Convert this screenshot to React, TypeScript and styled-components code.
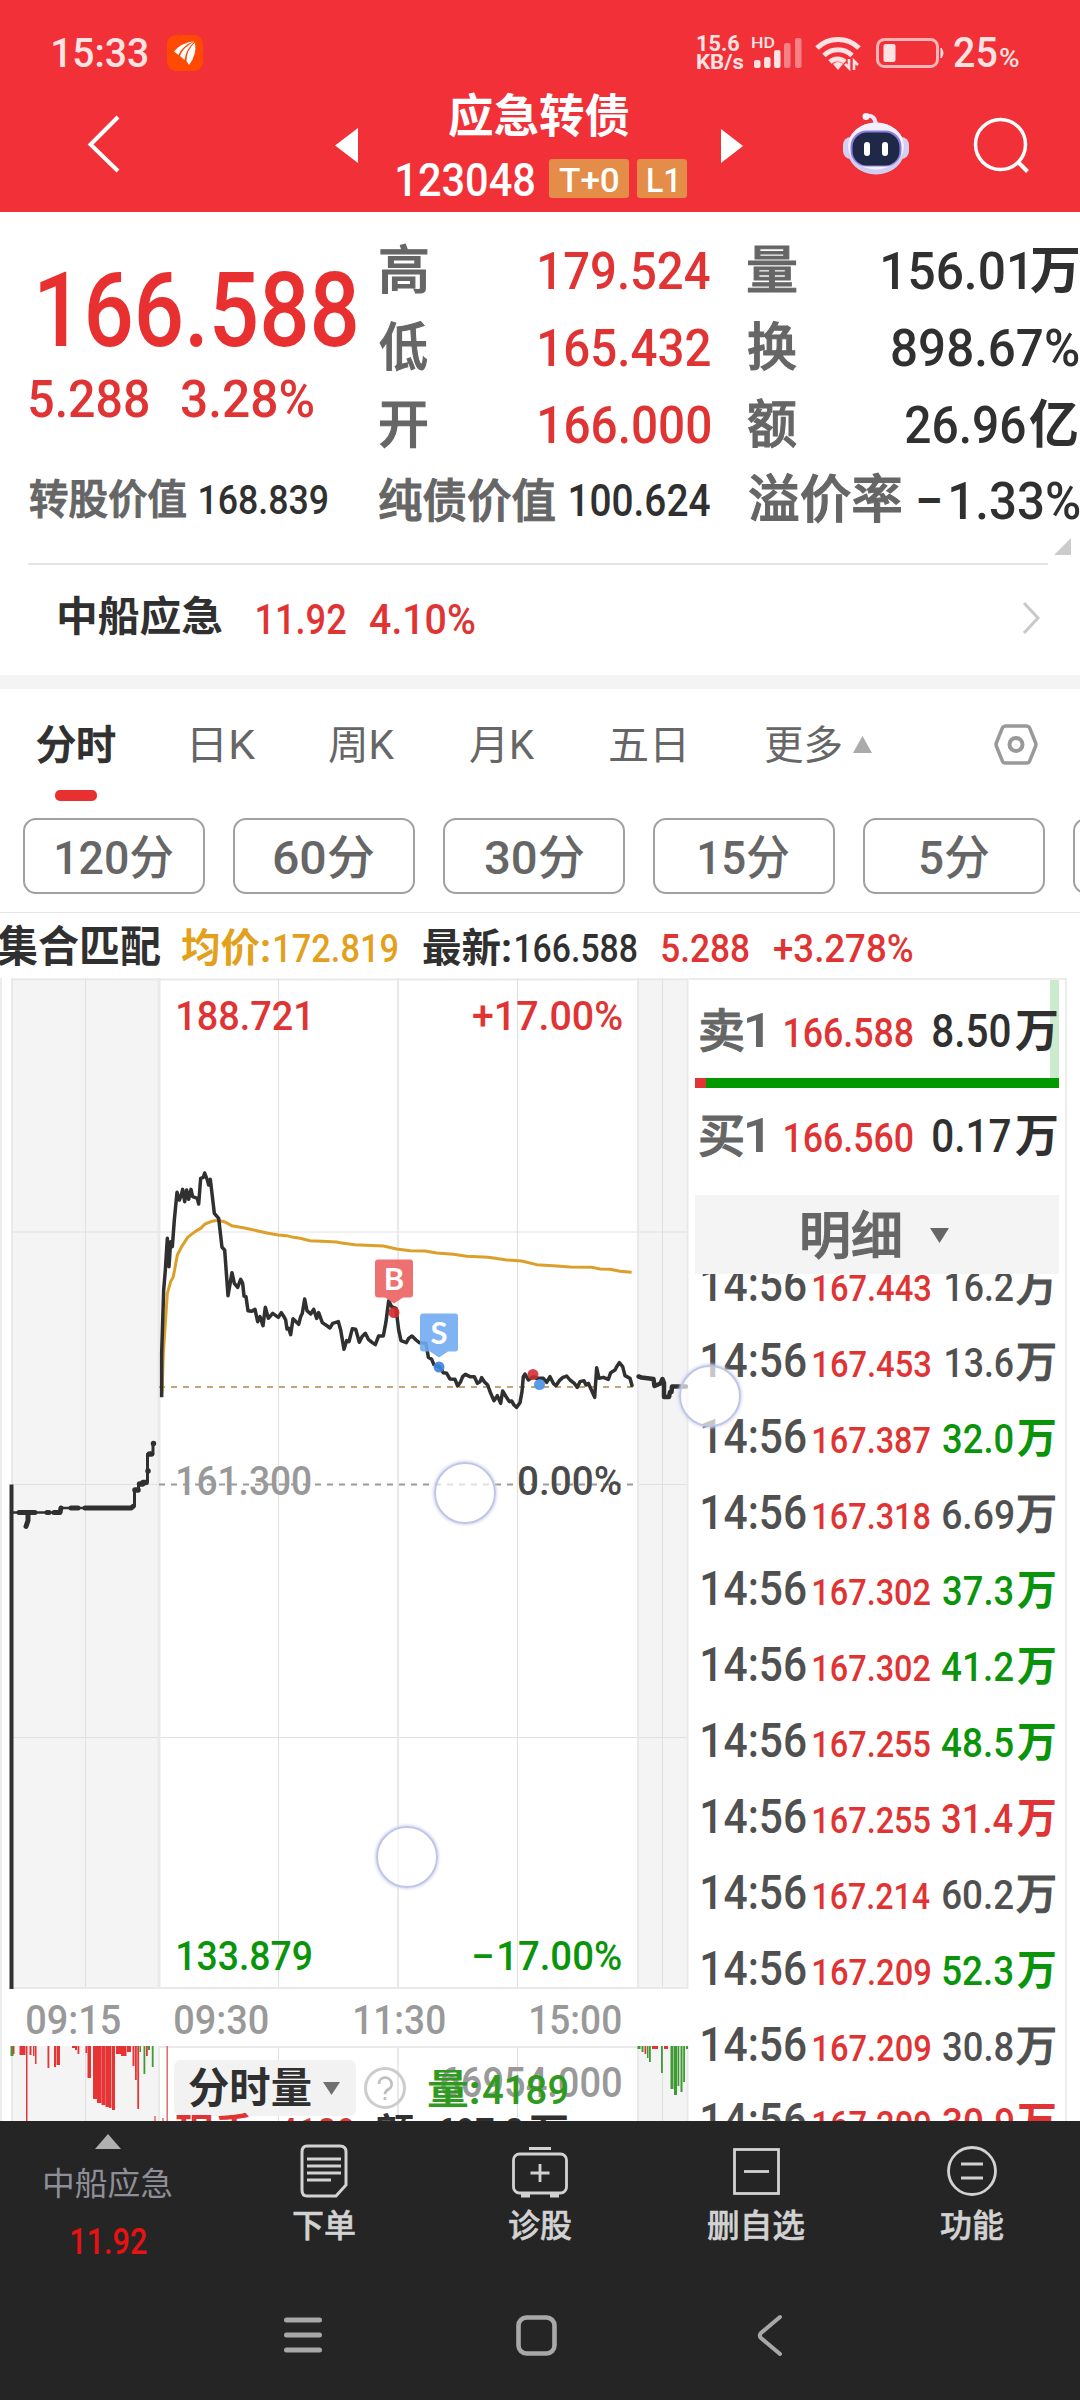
import React, { useMemo } from 'react';
import styled, { createGlobalStyle } from 'styled-components';

const FONT = 'Roboto, "Noto Sans CJK SC", sans-serif';

const C = {
  brand: '#f13038',
  red: '#e03434',
  green: '#0a940a',
  ink: '#303030',
  gray: '#666666',
  mid: '#505050',
  light: '#999999',
  orange: '#e2a01c',
  rule: '#e6e6e6',
  dark: '#252525',
};

const Global = createGlobalStyle`
  *{box-sizing:border-box}
  body{margin:0;background:#fff;font-family:${FONT}}
`;

/* ---------- condensed text: glyphs squeezed to a given ink width ---------- */

let ctx: CanvasRenderingContext2D | null = null;
function inkBox(text: string, size: number, weight: number) {
  if (!ctx) ctx = document.createElement('canvas').getContext('2d');
  ctx!.font = `${weight} ${size}px ${FONT}`;
  const m = ctx!.measureText(text);
  return { left: -m.actualBoundingBoxLeft, width: m.actualBoundingBoxRight + m.actualBoundingBoxLeft };
}

const FitBox = styled.div<{ $w: number; $size: number; $weight: number; $color: string; $ml: number; $mt: number; $han: boolean }>`
  flex: none;
  width: ${(p) => p.$w}px;
  height: ${(p) => p.$size}px;
  line-height: ${(p) => p.$size}px;
  margin-left: ${(p) => p.$ml}px;
  margin-top: ${(p) => p.$mt}px;
  font-size: ${(p) => p.$size}px;
  font-weight: ${(p) => p.$weight};
  color: ${(p) => p.$color};
  white-space: pre;
  -webkit-text-stroke: ${(p) => (p.$han && p.$weight === 500 ? (p.$size > 36 ? 1.1 : 0.5) : 0)}px ${(p) => p.$color};
`;
const Glyphs = styled.span`
  display: inline-block;
  transform-origin: 0 50%;
`;

type FitProps = { t: string; w: number; size: number; color?: string; weight?: number; ml?: number; mt?: number };
function Fit({ t, w, size, color = C.ink, weight = 500, ml = 0, mt = 0 }: FitProps) {
  const b = useMemo(() => inkBox(t, size, weight), [t, size, weight]);
  const k = w / b.width;
  const han = /^[\u4e00-\u9fff]+$/.test(t);
  return (
    <FitBox $w={w} $size={size} $weight={weight} $color={color} $ml={ml} $mt={mt} $han={han}>
      <Glyphs style={{ transform: `translateX(${-b.left * k}px) scaleX(${k})` }}>{t}</Glyphs>
    </FitBox>
  );
}

const Icon = styled.svg<{ $ml?: number; $mt?: number }>`
  display: block;
  flex: none;
  overflow: visible;
  margin-left: ${(p) => p.$ml ?? 0}px;
  margin-top: ${(p) => p.$mt ?? 0}px;
`;

const Screen = styled.div`
  position: relative;
  width: 1080px;
  height: 2400px;
  overflow: hidden;
  background: #fff;
  display: flex;
  flex-direction: column;
`;

/* ---------- header ---------- */

const Header = styled.header`
  height: 212px;
  flex: none;
  background: ${C.brand};
`;
const StatusBar = styled.div`
  height: 105px;
  display: flex;
  align-items: center;
`;
const Stack = styled.div<{ $ml?: number; $w?: number }>`
  flex: none;
  display: flex;
  flex-direction: column;
  margin-left: ${(p) => p.$ml ?? 0}px;
  width: ${(p) => (p.$w ? p.$w + 'px' : 'auto')};
`;
const TitleBar = styled.div`
  height: 107px;
  display: flex;
  align-items: flex-start;
`;
const CodeRow = styled.div`
  display: flex;
  align-items: center;
  height: 39px;
  margin-top: 20px;
`;
const Tag = styled.div<{ $w: number; $ml: number }>`
  width: ${(p) => p.$w}px;
  height: 39px;
  margin-left: ${(p) => p.$ml}px;
  border-radius: 3px;
  background: #e38d48;
  display: flex;
  align-items: center;
  justify-content: center;
`;

function StatusIcons() {
  const p = '#ffe3e3';
  return (
    <>
      <Icon width="51" height="32" viewBox="751 37 51 32" $ml={7}>
        {[[753, 60], [763, 57], [773, 50], [783, 43], [794, 38]].map(([x, y], i) => (
          <rect key={i} x={x} y={y} width="6.5" height={68 - y} rx="2" fill={p} opacity={i < 3 ? 1 : 0.45} />
        ))}
        <text x="750" y="48" fontSize="15" fontWeight="500" fontFamily={FONT} fill={p} textLength="24" lengthAdjust="spacingAndGlyphs">HD</text>
      </Icon>
      <Icon width="47" height="34" viewBox="0 0 47 34" $ml={12}>
        <g fill="none" stroke={p} strokeWidth="5">
          <path d="M2 12a30 30 0 0 1 42 0" />
          <path d="M9 19.500a20 20 0 0 1 28 0" />
          <path d="M15 26a11 11 0 0 1 15 0" />
        </g>
        <path d="M18 28q5-4 10 0l-5 6z" fill={p} />
        <path d="M34 23v9l-4-4M39 34v-9l4 4" fill="none" stroke={p} strokeWidth="2.600" />
      </Icon>
      <Icon width="69" height="30" viewBox="0 0 69 30" $ml={14}>
        <rect x="1.500" y="1.500" width="60" height="27" rx="7" fill="none" stroke={p} strokeOpacity=".75" strokeWidth="3" />
        <rect x="7.500" y="6" width="12" height="18" rx="2" fill={p} />
        <path d="M65 10q4 5 0 10z" fill={p} stroke={p} strokeWidth="1" />
      </Icon>
    </>
  );
}

function Robot() {
  return (
    <Icon width="66" height="62" viewBox="0 0 66 62" $ml={100} $mt={8}>
      <path d="M23 3q9-2 10 9" fill="none" stroke="#e8e6fa" strokeWidth="4" strokeLinecap="round" />
      <circle cx="23" cy="3.500" r="3.500" fill="#f6f4ff" />
      <rect x="0" y="24" width="66" height="22" rx="8" fill="#d4d2f2" />
      <ellipse cx="33" cy="35.500" rx="29" ry="26" fill="#d0cef2" />
      <ellipse cx="33" cy="33" rx="28" ry="23.500" fill="#f3f1ff" />
      <rect x="7.500" y="17.500" width="51" height="36" rx="16" fill="#8d7fe0" />
      <rect x="9.500" y="19.500" width="47" height="33" rx="14.500" fill="#1f2846" />
      <rect x="21" y="29" width="6" height="14" rx="3" fill="#fff" />
      <rect x="39" y="29" width="6" height="14" rx="3" fill="#fff" />
    </Icon>
  );
}

function TopHeader() {
  return (
    <Header>
      <StatusBar>
        <Fit t="15:33" w={95} size={41} color="#ffe3e3" ml={53} mt={1} />
        <Icon width="36" height="36" viewBox="0 0 36 36" $ml={19}>
          <rect width="36" height="36" rx="9" fill="#ff4a03" />
          <path d="M7 16.500q7-8.500 20-10.500Q15 11 11.500 20zM13 21q3-9 14.500-14.500Q19 14 17.500 25zM19.500 26q0-11 8.500-18.500Q30 20 22 30z" fill="#fff" />
        </Icon>
        <Stack $ml={494} $w={48}>
          <Fit t="15.6" w={42} size={22} weight={700} color="#ffe3e3" />
          <Fit t="KB/s" w={47} size={21} weight={700} color="#ffe3e3" mt={-3} />
        </Stack>
        <StatusIcons />
        <Fit t="25" w={43} size={42} color="#ffe3e3" ml={9} mt={1} />
        <Fit t="%" w={19} size={25} color="#ffe3e3" ml={3} mt={11} />
      </StatusBar>
      <TitleBar>
        <Icon width="32" height="58" viewBox="0 0 32 58" $ml={88} $mt={10}>
          <path d="M30 2L2.500 29.500L30 56" fill="none" stroke="#fff" strokeWidth="4" />
        </Icon>
        <Icon width="23" height="35" viewBox="0 0 23 35" $ml={215} $mt={23}>
          <path d="M0 17.500L23 0v35z" fill="#fff" />
        </Icon>
        <Stack $ml={39} $w={290}>
          <Fit t="应急转债" w={180} size={46} weight={700} color="#fff" ml={52} mt={-12} />
          <CodeRow>
            <Fit t="123048" w={137} size={46} weight={500} color="#fff" mt={3} />
            <Tag $w={80} $ml={15}><Fit t="T+0" w={60} size={33} color="#fff" mt={3} /></Tag>
            <Tag $w={50} $ml={8}><Fit t="L1" w={28} size={33} color="#fff" mt={3} /></Tag>
          </CodeRow>
        </Stack>
        <Icon width="22" height="34" viewBox="0 0 22 34" $ml={34} $mt={24}>
          <path d="M22 17L0 0v34z" fill="#fff" />
        </Icon>
        <Robot />
        <Icon width="56" height="56" viewBox="0 0 56 56" $ml={65} $mt={13}>
          <circle cx="26.500" cy="26.500" r="25" fill="none" stroke="#fff" strokeWidth="3.500" />
          <path d="M44.500 44.500l9 9" stroke="#fff" strokeWidth="4" />
        </Icon>
      </TitleBar>
    </Header>
  );
}

/* ---------- quote ---------- */

const Quote = styled.section`
  display: flex;
  height: 264px;
  flex: none;
`;
const Cell = styled.div`
  height: 77px;
  display: flex;
  align-items: baseline;
`;
const Column = styled.div<{ $w: number; $pt: number }>`
  flex: none;
  width: ${(p) => p.$w}px;
  padding-top: ${(p) => p.$pt}px;
`;
const Push = styled.div`
  flex: 1;
`;
const ValueRow = styled.div`
  display: flex;
  align-items: center;
  height: 47px;
  flex: none;
`;
const CornerRow = styled.div`
  height: 42px;
  flex: none;
  margin: 0 32px 0 28px;
  border-bottom: 2px solid #e4e4e4;
  padding-top: 15px;
`;
const StockRow = styled.div`
  height: 110px;
  flex: none;
  display: flex;
  align-items: center;
`;
const Band = styled.div`
  height: 14px;
  flex: none;
  background: #f4f4f4;
`;

function QuotePanel() {
  return (
    <>
      <Quote>
        <Column $w={380} $pt={47}>
          <Fit t="166.588" w={316} size={103} weight={500} color="#e83030" ml={40} />
          <Cell>
            <Fit t="5.288" w={118} size={52} color={C.red} ml={30} mt={12} />
            <Fit t="3.28%" w={132} size={52} color={C.red} ml={33} mt={12} />
          </Cell>
        </Column>
        <Column $w={330} $pt={34}>
          {[['高', '179.524'], ['低', '165.432'], ['开', '166.000']].map(([l, v]) => (
            <Cell key={l}>
              <Fit t={l} w={47} size={52} color={C.gray} />
              <Push />
              <Fit t={v} w={170} size={52} color={C.red} />
            </Cell>
          ))}
        </Column>
        <Column $w={370} $pt={34}>
          <Cell>
            <Fit t="量" w={48} size={52} color={C.gray} ml={38} />
            <Fit t="156.01" w={142} size={52} ml={87} />
            <Fit t="万" w={48} size={52} weight={700} ml={5} />
          </Cell>
          <Cell>
            <Fit t="换" w={48} size={52} color={C.gray} ml={38} />
            <Fit t="898.67%" w={186} size={52} ml={96} />
          </Cell>
          <Cell>
            <Fit t="额" w={48} size={52} color={C.gray} ml={38} />
            <Fit t="26.96" w={119} size={52} ml={110} />
            <Fit t="亿" w={48} size={52} weight={700} ml={4} />
          </Cell>
        </Column>
      </Quote>
      <ValueRow>
        <Fit t="转股价值" w={156} size={41} color={C.gray} ml={30} mt={2} />
        <Fit t="168.839" w={127} size={41} ml={14} mt={2} />
        <Fit t="纯债价值" w={176} size={46} color={C.gray} ml={52} mt={2} />
        <Fit t="100.624" w={140} size={45} ml={15} mt={2} />
        <Fit t="溢价率" w={152} size={52} color={C.gray} ml={39} mt={2} />
        <Fit t="–" w={22} size={52} ml={17} mt={4} />
        <Fit t="1.33%" w={128} size={52} ml={11} mt={4} />
      </ValueRow>
      <CornerRow>
        <Icon width="17" height="17" viewBox="0 0 17 17" $ml={1026}>
          <path d="M17 0v17H0z" fill="#ccc" />
        </Icon>
      </CornerRow>
      <StockRow>
        <Fit t="中船应急" w={163} size={41} weight={700} ml={59} mt={-5} />
        <Fit t="11.92" w={89} size={42} color={C.red} ml={35} />
        <Fit t="4.10%" w={105} size={42} color={C.red} ml={24} />
        <Icon width="18" height="32" viewBox="0 0 18 32" $ml={547} $mt={-5}>
          <path d="M2 1l14 15L2 31" fill="none" stroke="#c8c8c8" strokeWidth="3" />
        </Icon>
      </StockRow>
      <Band />
    </>
  );
}

/* ---------- tabs ---------- */

const Tabs = styled.nav`
  display: flex;
  align-items: flex-start;
  height: 129px;
  flex: none;
  padding-top: 37px;
`;
const Underline = styled.div`
  width: 42px;
  height: 11px;
  border-radius: 5px;
  background: #e83030;
  margin: 24px 0 0 18px;
`;
const Periods = styled.div`
  display: flex;
  gap: 28px;
  height: 95px;
  flex: none;
  padding-left: 23px;
  overflow: hidden;
  border-bottom: 1.5px solid ${C.rule};
`;
const Period = styled.div`
  flex: none;
  width: 182px;
  height: 76px;
  border: 2px solid #a0a0a0;
  border-radius: 13px;
  display: flex;
  align-items: center;
  justify-content: center;
  padding-top: 2px;
`;

const PERIODS: [string, number][] = [['120分', 117], ['60分', 100], ['30分', 99], ['15分', 90], ['5分', 69]];

function TabSection() {
  return (
    <>
      <Tabs>
        <Stack $ml={37}>
          <Fit t="分时" w={78} size={40} />
          <Underline />
        </Stack>
        <Fit t="日K" w={63} size={40} weight={400} color={C.gray} ml={78} />
        <Fit t="周K" w={66} size={40} weight={400} color={C.gray} ml={73} />
        <Fit t="月K" w={65} size={40} weight={400} color={C.gray} ml={75} />
        <Fit t="五日" w={74} size={40} weight={400} color={C.gray} ml={75} />
        <Fit t="更多" w={76} size={40} weight={400} color={C.gray} ml={81} />
        <Icon width="19" height="17" viewBox="0 0 19 17" $ml={12} $mt={10}>
          <path d="M9.500 0l9.500 17H0z" fill="#aaa" />
        </Icon>
        <Icon width="44" height="42" viewBox="0 0 44 42" $ml={122} $mt={-2}>
          <path d="M11.500 2h21q2 0 3 1.700l6 14.800q.8 2 0 4l-6 14.800q-1 1.700-3 1.700h-21q-2 0-3-1.700l-6-14.800q-.8-2 0-4l6-14.800q1-1.700 3-1.700z" fill="none" stroke="#999" strokeWidth="3.500" strokeLinejoin="round" />
          <circle cx="22" cy="20.500" r="6.500" fill="none" stroke="#999" strokeWidth="4" />
        </Icon>
      </Tabs>
      <Periods>
        {PERIODS.map(([t, w]) => (
          <Period key={t}><Fit t={t} w={w} size={47} color={C.gray} /></Period>
        ))}
        <Period />
      </Periods>
    </>
  );
}

/* ---------- info line ---------- */

const Info = styled.div`
  display: flex;
  align-items: baseline;
  height: 65px;
  flex: none;
  padding-top: 13px;
`;

/* ---------- main area ---------- */

const Main = styled.main`
  display: flex;
  height: 1143px;
  flex: none;
  overflow: hidden;
`;
const ChartColumn = styled.div`
  width: 689px;
  flex: none;
`;
const ChartArea = styled.div<{ $h: number }>`
  position: relative;
  height: ${(p) => p.$h}px;
  overflow: hidden;
`;
const Plot = styled.svg`
  display: block;
`;
const Overlay = styled.div`
  position: absolute;
  inset: 0;
`;
const LabelRow = styled.div<{ $pt: number }>`
  display: flex;
  align-items: baseline;
  padding-top: ${(p) => p.$pt}px;
`;
const Axis = styled.div`
  display: flex;
  height: 57px;
  padding-top: 11px;
  border-left: 2px solid #ececec;
`;

const PRICE_A =
  '65,772 65,640 71,450 76,390 82,295 87,380 92,305 97,320 103,240 111,157 118,180 124,165 128,148 134,185 140,150 146,178 153,148 158,170 172,175 176,192 182,115 190,112 194,99 202,120 206,135 211,118 223,220 236,235 246,322 254,330 264,467 276,398 283,430 293,442 302,418 308,430 312,468 318,470 324,512 335,514 345,508 353,545 360,530 369,557 376,502 385,535 398,520 415,532 424,518 432,530 437,540 441,567 446,565 452,584 459,536 476,553 482,530 487,520 494,477 501,512 512,522 521,508 530,535 536,518 547,548 562,558 570,564 578,550 595,545 602,570 612,628 620,602 627,605 637,566 647,568 658,607 666,590 676,580 685,598 697,608 706,614 716,588 730,588 738,545 746,482 755,500 768,505 776,570 783,602 799,608 806,595 816,588 828,600 838,608 858,610 865,652 875,658 883,677';
const PRICE_B =
  '283,437 298,440 310,458 320,460 330,477 345,478 353,498 362,485 368,470 376,463 390,470 403,470 412,490 420,485 425,473 433,485 443,495 452,520 462,542 472,527 482,550 488,513 497,528 508,545 515,543 522,555 530,562 540,548 546,515 550,470 555,462 565,480 580,470 590,475 610,475 620,487 630,470 640,490 648,497 658,482 668,473 680,468 690,480 703,490 712,502 720,485 732,482 738,495 745,490 764,532 770,443 777,475 790,472 805,478 812,458 825,450 830,440 838,428 848,440 855,467 870,475 877,500';
const AVG_A =
  '66,760 70,640 82,460 92,425 100,410 112,345 125,320 143,292 165,275 182,265 195,252 215,244 236,241 255,246 275,257 310,263 350,272 385,280 415,285 440,287 460,292 480,295 510,302 545,304 590,306 600,308';
const AVG_B =
  '0,68 45,74 130,78 170,87 210,92 255,93 290,99 340,103 380,109 445,112 500,120 545,123 590,134 640,137 690,141 755,142 780,147 810,148 840,154 875,157';

function Marker({ x, y, label, fill }: { x: number; y: number; label: string; fill: string }) {
  return (
    <g>
      <path d={`M${x - 16} ${y}h32q3 0 3 3v32q0 3-3 3h-7l-9 6-9-6h-7q-3 0-3-3v-32q0-3 3-3z`} fill={fill} fillOpacity=".9" />
      <text x={x} y={y + 30} textAnchor="middle" fontFamily="Lato, sans-serif" fontWeight="700" fontSize="31" fill="#fff">{label}</text>
    </g>
  );
}

function PriceChart() {
  return (
    <ChartArea $h={1011}>
      <Plot width="689" height="1011" viewBox="0 978 689 1011">
        <rect x="0" y="978" width="2" height="1011" fill="#ececec" />
        <rect x="12" y="978" width="147" height="1011" fill="#f4f4f4" />
        <rect x="637" y="978" width="50" height="1011" fill="#f4f4f4" />
        <g stroke="#e0e0e0" strokeWidth="1">
          <path d="M85.500 978V1989M278.500 978V1989M517.500 978V1989M662.500 978V1989" />
          <path d="M12 1232h675M12 1484.500h147M637 1484.500h50M12 1737.500h675" />
        </g>
        <g stroke="#e9e9e9" strokeWidth="2">
          <path d="M12 978V1989M398 978V1989M638 978V1989M687.500 978V1989M12 979.500h675M12 1988h675" />
          <path d="M159 978V1989" strokeWidth="3" />
        </g>
        <path d="M159 1387h475" stroke="#bfa878" strokeWidth="2" strokeDasharray="6 6" />
        <path d="M159 1484.500h475" stroke="#9a9a9a" strokeWidth="2" strokeDasharray="6 6" />
        <g fill="none" strokeLinejoin="round" strokeLinecap="butt">
          <g transform="translate(140 1140) scale(.33333)">
            <polyline points={AVG_A} stroke="#dc9f2a" strokeWidth="9" />
            <polyline points={PRICE_A} stroke="#303030" strokeWidth="10.5" />
          </g>
          <g transform="translate(340 1220) scale(.33333)">
            <polyline points={AVG_B} stroke="#dc9f2a" strokeWidth="9" />
            <polyline points={PRICE_B} stroke="#303030" strokeWidth="10.5" />
          </g>
          <g stroke="#303030" strokeLinecap="round">
            <path d="M11.500 1484.500V1989" strokeWidth="4" strokeLinecap="butt" />
            <path d="M11 1512.500H61M61 1508H133" strokeWidth="2.500" />
            <path d="M19 1512.500h16M28 1512.500v8l-2 6M47 1512.500h2M54 1512.500h6l1-4.500M71 1508h7M85 1508h46l2-1.500" strokeWidth="5" />
            <path d="M134.500 1506v-16.500h4v-5l8-2.500h1v-28h5.500v-10" strokeWidth="3" />
            <path d="M135 1490h3M139.500 1484h3M143 1482.500h3M148 1471v.1M149.500 1454h2M153.500 1443.500v.1" strokeWidth="5.500" />
            <path d="M638.500 1376.500l3 1 12 1.500 1 7 6-2.500 2-4.500 1.500 4v14h5l1-5h1.500l.5-5.500H686" strokeWidth="4.500" />
          </g>
        </g>
        <circle cx="394" cy="1312.500" r="5.500" fill="#d22a2e" fillOpacity=".92" />
        <circle cx="439" cy="1367" r="5.500" fill="#3f86dc" fillOpacity=".92" />
        <circle cx="533" cy="1374.500" r="5.500" fill="#d22a2e" fillOpacity=".88" />
        <circle cx="539.500" cy="1384.500" r="5.500" fill="#4a92e6" fillOpacity=".92" />
        <Marker x={394} y={1259.5} label="B" fill="#ec6263" />
        <Marker x={439} y={1313.5} label="S" fill="#72abef" />
      </Plot>
      <Overlay>
        <LabelRow $pt={18}>
          <Fit t="188.721" w={130} size={41} color={C.red} ml={178} />
          <Fit t="+17.00%" w={149} size={41} color={C.red} ml={165} />
        </LabelRow>
        <LabelRow $pt={424}>
          <Fit t="161.300" w={133} size={41} color={C.light} ml={178} />
          <Fit t="0.00%" w={102} size={41} color="#4a4a4a" ml={208} />
        </LabelRow>
        <LabelRow $pt={434}>
          <Fit t="133.879" w={133} size={41} color={C.green} ml={178} />
          <Fit t="–" w={18} size={41} color={C.green} ml={163} />
          <Fit t="17.00%" w={122} size={41} color={C.green} ml={7} />
        </LabelRow>
      </Overlay>
    </ChartArea>
  );
}

const VOL_BARS: [number, number, number, string][] = [
  [10.5, 3, 10, 'g'], [13, 1.5, 8, 'r'], [19.5, 6, 9, 'r'], [26, 1.5, 78, 'r'], [29.5, 2, 9, 'r'], [33, 1.5, 10, 'r'], [35, 1.5, 18, 'r'],
  [47.5, 1.8, 22, 'r'], [54, 2, 21, 'r'], [56.5, 3.5, 19, 'r'], [72, 3, 2, 'r'], [75, 2, 4, 'r'], [77.5, 1.8, 8, 'r'],
  [85.5, 1.8, 7, 'r'], [87.5, 3.5, 32, 'r'], [93, 4, 53, 'r'], [97, 4.5, 57, 'r'], [101.5, 4, 59, 'r'], [105.5, 3.5, 61, 'r'],
  [109, 2.5, 62, 'r'], [112, 3, 64, 'r'], [116, 5, 8, 'r'], [121, 5.5, 10, 'r'], [127, 4, 6, 'r'], [132.5, 2, 20, 'r'],
  [135, 1.8, 34, 'r'], [137.3, 1.8, 63, 'r'], [139.5, 1.5, 6, 'g'], [143.5, 1.8, 28, 'g'], [146, 1.8, 10, 'r'], [148, 2, 4, 'g'], [151.8, 1.8, 21, 'g'],
  [637.5, 3, 3, 'g'], [641.5, 2, 6, 'g'], [644.5, 1.8, 8, 'r'], [647, 1.5, 12, 'g'], [649, 1.8, 16, 'g'], [652, 6, 3, 'r'],
  [661, 1.8, 27, 'g'], [664, 4, 3, 'r'], [670.5, 3, 43, 'g'], [674, 3, 49, 'g'], [677.5, 1.8, 40, 'g'], [680.5, 2, 46, 'g'], [683.2, 1.8, 36, 'g'], [686, 2, 3, 'g'],
];

const VolumeHead = styled.div`
  display: flex;
  align-items: flex-start;
  padding: 14px 0 0 174px;
  height: 68px;
`;
const Picker = styled.div`
  display: flex;
  align-items: center;
  width: 182px;
  height: 56px;
  border-radius: 7px;
  background: #f2f2f2;
`;
const MaxVolume = styled.div`
  position: absolute;
  left: 441px;
  top: 16px;
`;

function VolumeChart() {
  return (
    <ChartArea $h={75}>
      <Plot width="689" height="75" viewBox="0 0 689 75">
        <rect x="0" y="0" width="2" height="75" fill="#ececec" />
        <rect x="12" y="0" width="147" height="75" fill="#f4f4f4" />
        <rect x="637" y="0" width="50" height="75" fill="#f4f4f4" />
        <path d="M85.500 0V75M278.500 0V75M517.500 0V75M662.500 0V75" stroke="#e0e0e0" />
        <path d="M12 0V75M159 0V75M398 0V75M638 0V75M687.500 0V75M159 1h480" stroke="#e9e9e9" strokeWidth="2" />
        {VOL_BARS.map(([x, w, h, c], i) => (
          <rect key={i} x={x} y={0} width={w} height={h} fill={c === 'r' ? '#e63434' : '#3f9a34'} />
        ))}
        <path d="M167.200 0V75M177 48v14M155 70v5M163 72v3" stroke="#e06060" strokeWidth="1.400" />
      </Plot>
      <Overlay>
        <VolumeHead>
          <Picker>
            <Fit t="分时量" w={122} size={42} weight={700} ml={15} mt={2} />
            <Icon width="17" height="13" viewBox="0 0 17 13" $ml={12}><path d="M0 0h17l-8.500 13z" fill="#707070" /></Icon>
          </Picker>
          <Icon width="42" height="42" viewBox="0 0 42 42" $ml={8} $mt={7}>
            <circle cx="21" cy="21" r="19.500" fill="none" stroke="#ccc" strokeWidth="3" />
            <path d="M15 17a6.300 6.300 0 1 1 9.500 5.300q-3.500 2-3.500 5M21 30v3" fill="none" stroke="#c0c0c0" strokeWidth="2.800" />
          </Icon>
        </VolumeHead>
        <LabelRow $pt={0}>
          <Fit t="现手" w={78} size={39} weight={700} color={C.red} ml={175} mt={-2} />
          <Fit t=":" w={5} size={39} weight={700} color={C.red} ml={10} />
          <Fit t="4189" w={75} size={39} color={C.red} ml={11} />
          <Fit t="额" w={38} size={39} weight={700} ml={22} />
          <Fit t=":" w={5} size={39} weight={700} ml={10} />
          <Fit t="697.8" w={85} size={39} ml={9} />
          <Fit t="万" w={38} size={39} weight={700} ml={6} />
        </LabelRow>
      </Overlay>
      <MaxVolume><Fit t="66954.000" w={180} size={42} color={C.light} /></MaxVolume>
      <Overlay>
        <LabelRow $pt={24}>
          <Fit t="量:" w={50} size={41} weight={700} color="#2f9a20" ml={428} />
          <Fit t="4189" w={84} size={41} color="#2f9a20" ml={5} />
        </LabelRow>
      </Overlay>
    </ChartArea>
  );
}

/* ---------- order book and trades ---------- */

const Book = styled.aside`
  width: 378px;
  flex: none;
  padding-left: 6px;
  border-right: 2px solid #ececec;
  border-top: 2px solid #ececec;
  display: flex;
  flex-direction: column;
`;
const Sell = styled.div`
  height: 98px;
  width: 364px;
  flex: none;
  display: flex;
  align-items: baseline;
  padding: 26px 0 0 5px;
  background: linear-gradient(#cceacc, #cceacc) right top / 9px 100% no-repeat;
`;
const Ratio = styled.div`
  height: 10px;
  width: 364px;
  flex: none;
  background: linear-gradient(90deg, #e33434 11px, #009900 11px);
`;
const Buy = styled(Sell)`
  height: 107px;
  padding-top: 23px;
  background: none;
`;
const DetailHead = styled.div`
  width: 364px;
  height: 79px;
  flex: none;
  background: #f4f4f4;
  display: flex;
  align-items: center;
`;
const TradeList = styled.div`
  flex: 1;
  min-height: 0;
  overflow: hidden;
  display: flex;
  flex-direction: column;
`;
const Trade = styled.div<{ $first: boolean }>`
  height: 76px;
  flex: none;
  display: flex;
  align-items: baseline;
  padding: 13px 0 0 7px;
  margin-top: ${(p) => (p.$first ? -26 : 0)}px;
`;

const TRADES: [string, string, string, number][] = [
  ['167.443', '16.2', C.mid, 67], ['167.453', '13.6', C.mid, 67], ['167.387', '32.0', C.green, 70], ['167.318', '6.69', C.mid, 70],
  ['167.302', '37.3', C.green, 70], ['167.302', '41.2', C.green, 71], ['167.255', '48.5', C.green, 71], ['167.255', '31.4', C.red, 71],
  ['167.214', '60.2', C.mid, 70], ['167.209', '52.3', C.green, 70], ['167.209', '30.8', C.mid, 70], ['167.209', '30.9', C.red, 70],
];

function BookPanel() {
  return (
    <Book>
      <Sell>
        <Fit t="卖" w={43} size={46} color={C.gray} />
        <Fit t="1" w={16} size={49} weight={600} color={C.gray} ml={4} />
        <Fit t="166.588" w={128} size={41} color={C.red} ml={22} />
        <Fit t="8.50" w={77} size={47} ml={20} />
        <Fit t="万" w={42} size={45} weight={700} ml={5} />
      </Sell>
      <Ratio />
      <Buy>
        <Fit t="买" w={43} size={46} color={C.gray} />
        <Fit t="1" w={16} size={49} weight={600} color={C.gray} ml={4} />
        <Fit t="166.560" w={128} size={41} color={C.red} ml={22} />
        <Fit t="0.17" w={77} size={47} ml={20} />
        <Fit t="万" w={42} size={45} weight={700} ml={5} />
      </Buy>
      <DetailHead>
        <Fit t="明细" w={98} size={51} color={C.gray} ml={107} mt={3} />
        <Icon width="19" height="15" viewBox="0 0 19 15" $ml={30} $mt={2}><path d="M0 0h19l-9.500 15z" fill="#666" /></Icon>
      </DetailHead>
      <TradeList>
        {TRADES.map(([price, vol, color, w], i) => (
          <Trade key={i} $first={i === 0}>
            <Fit t="14:56" w={104} size={48} color={C.mid} />
            <Fit t={price} w={116} size={37} color={C.red} ml={8} />
            <Fit t={vol} w={w} size={41} color={color} ml={83 - w} />
            <Fit t="万" w={38} size={42} weight={color === C.mid ? 500 : 700} color={color} ml={4} />
          </Trade>
        ))}
      </TradeList>
    </Book>
  );
}

/* ---------- touch rings ---------- */

const Ring = styled.div<{ $x: number; $y: number }>`
  position: absolute;
  left: ${(p) => p.$x - 31}px;
  top: ${(p) => p.$y - 31}px;
  width: 62px;
  height: 62px;
  border-radius: 50%;
  border: 2px solid #bfc5e4;
  background: rgba(255, 255, 255, 0.68);
  box-shadow: 0 0 3px 1px #d2d6f2;
`;

/* ---------- bottom ---------- */

const Bottom = styled.footer`
  flex: 1;
  background: ${C.dark};
`;
const Actions = styled.div`
  display: grid;
  grid-template-columns: repeat(5, 216px);
  height: 153px;
`;
const Action = styled.div<{ $pt: number }>`
  display: flex;
  flex-direction: column;
  align-items: center;
  padding-top: ${(p) => p.$pt}px;
`;
const ActionIcon = styled.div`
  height: 66px;
`;
const SystemNav = styled.div`
  display: flex;
  align-items: center;
  height: 122px;
`;

function BottomBar() {
  const s = '#d2d2d2';
  return (
    <Bottom>
      <Actions>
        <Action $pt={13}>
          <Icon width="26" height="15" viewBox="0 0 26 15"><path d="M13 0l13 15H0z" fill="#b0b0b0" /></Icon>
          <Fit t="中船应急" w={127} size={32} weight={400} color="#8e8e98" mt={19} />
          <Fit t="11.92" w={76} size={36} color="#e81212" ml={2} mt={24} />
        </Action>
        <Action $pt={23}>
          <ActionIcon>
            <Icon width="48" height="54" viewBox="0 0 48 54" fill="none" stroke={s} strokeWidth="3">
              <path d="M7 2h33q6 0 6 6v33l-10 11H7q-5 0-5-6V8q0-6 5-6z" />
              <path d="M7 15h34M7 22h34M7 29h34M7 36h24" />
            </Icon>
          </ActionIcon>
          <Fit t="下单" w={62} size={32} color={s} />
        </Action>
        <Action $pt={23}>
          <ActionIcon>
            <Icon width="56" height="54" viewBox="0 0 56 54" fill="none" stroke={s} strokeWidth="2.800">
              <rect x="1.500" y="10" width="53" height="39" rx="6" />
              <path d="M17 4.500h22M28 20v18M18.500 29h19" />
              <path d="M9 51.500h9M38 51.500h9" strokeWidth="4" />
            </Icon>
          </ActionIcon>
          <Fit t="诊股" w={63} size={32} color={s} />
        </Action>
        <Action $pt={23}>
          <ActionIcon>
            <Icon width="47" height="54" viewBox="0 0 47 54" fill="none" stroke={s} strokeWidth="2.800">
              <rect x="1.500" y="5.500" width="44" height="44" />
              <path d="M11 27.500h25" />
            </Icon>
          </ActionIcon>
          <Fit t="删自选" w={96} size={32} color={s} />
        </Action>
        <Action $pt={23}>
          <ActionIcon>
            <Icon width="50" height="54" viewBox="0 0 50 54" fill="none" stroke={s} strokeWidth="2.800">
              <circle cx="25" cy="27" r="23.500" />
              <path d="M14 20h22M14 34h22" />
            </Icon>
          </ActionIcon>
          <Fit t="功能" w={62} size={32} color={s} />
        </Action>
      </Actions>
      <SystemNav>
        <Icon width="38" height="38" viewBox="0 0 38 38" $ml={284}>
          <path d="M2.500 4h33M2.500 19h33M2.500 34h33" stroke="#a8a8a8" strokeWidth="5" strokeLinecap="round" />
        </Icon>
        <Icon width="41" height="41" viewBox="0 0 41 41" $ml={194}>
          <rect x="2.500" y="2.500" width="36" height="36" rx="8" fill="none" stroke="#a8a8a8" strokeWidth="4.600" />
        </Icon>
        <Icon width="25" height="41" viewBox="0 0 25 41" $ml={200}>
          <path d="M23 2L4 18q-2.500 2.500 0 5L23 39" fill="none" stroke="#a8a8a8" strokeWidth="4" strokeLinecap="round" />
        </Icon>
      </SystemNav>
    </Bottom>
  );
}

export default function App() {
  return (
    <Screen>
      <Global />
      <TopHeader />
      <QuotePanel />
      <TabSection />
      <Info>
        <Fit t="集合匹配" w={163} size={43} weight={700} ml={-3} />
        <Fit t="均价:" w={87} size={40} weight={700} color={C.orange} ml={22} />
        <Fit t="172.819" w={122} size={39} color={C.orange} ml={6} />
        <Fit t="最新:" w={87} size={40} weight={700} ml={26} />
        <Fit t="166.588" w={121} size={39} ml={6} />
        <Fit t="5.288" w={87} size={39} color={C.red} ml={25} />
        <Fit t="+3.278%" w={138} size={39} color={C.red} ml={25} />
      </Info>
      <Main>
        <ChartColumn>
          <PriceChart />
          <Axis>
            <Fit t="09:15" w={93} size={41} color={C.light} ml={25} />
            <Fit t="09:30" w={93} size={41} color={C.light} ml={55} />
            <Fit t="11:30" w={90} size={41} color={C.light} ml={87} />
            <Fit t="15:00" w={90} size={41} color={C.light} ml={86} />
          </Axis>
          <VolumeChart />
        </ChartColumn>
        <BookPanel />
      </Main>
      <BottomBar />
      <Ring $x={465} $y={1493} />
      <Ring $x={710} $y={1396} />
      <Ring $x={407} $y={1857} />
    </Screen>
  );
}
